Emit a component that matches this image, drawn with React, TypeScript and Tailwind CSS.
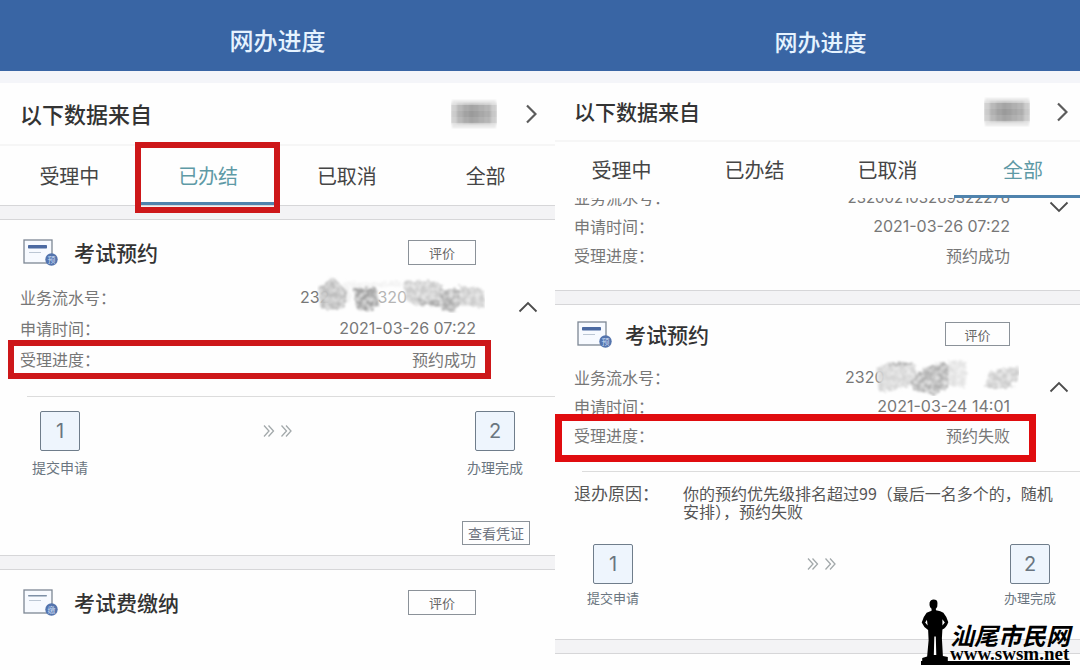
import React from "react";

const SANS = "font-['Noto_Sans_CJK_SC',sans-serif]";
const NUM = "font-['Inter','Noto_Sans_CJK_SC',sans-serif]";

function Chevron({ dir }: { dir: "right" | "up" | "down" }) {
  const d =
    dir === "right" ? "M2 1.5 L10.5 10 L2 18.5" : dir === "up" ? "M1.5 10.5 L10 2 L18.5 10.5" : "M1.5 1.5 L10 10 L18.5 1.5";
  return dir === "right" ? (
    <svg width="12" height="20" viewBox="0 0 12 20" fill="none" stroke="#5c5c5c" strokeWidth="2.2">
      <path d={d} />
    </svg>
  ) : (
    <svg width="20" height="12" viewBox="0 0 20 12" fill="none" stroke="#4c4c4c" strokeWidth="1.8">
      <path d={d} />
    </svg>
  );
}

function FormIcon({ badge, faint = false }: { badge: string; faint?: boolean }) {
  return (
    <svg className="shrink-0" width="36" height="28" viewBox="0 0 36 28">
      <rect x="1" y="2" width="28" height="23" fill="#f7faff" stroke="#7d8794" strokeWidth="1.3" />
      <rect x="5" y="7" width="19" height={faint ? 1.5 : 3.5} rx="0.7" fill={faint ? "#7d8fa6" : "#4c6aa2"} />
      <rect x="6" y={faint ? 12 : 14} width="12" height="1" fill="#bcc7d4" />
      <circle cx="28.5" cy="21.5" r="6.2" fill="#5474ad" />
      <text x="28.5" y="24.6" textAnchor="middle" fontSize="8" fill="#c9daf3" className={SANS}>
        {badge}
      </text>
    </svg>
  );
}

function Arrows() {
  return (
    <svg width="30" height="14" viewBox="0 0 30 14" fill="none" stroke="#a3a9ab" strokeWidth="1.3">
      <path d="M1 1.5 L6 7 L1 12.5 M5.500 1.5 L10.500 7 L5.500 12.5 M18.500 1.5 L23.500 7 L18.500 12.5 M23 1.5 L28 7 L23 12.5" />
    </svg>
  );
}

function Mosaic() {
  const shades = ["#c9c9c9", "#a9a9a9", "#989898", "#8e8e8e", "#959595", "#9d9d9d", "#a6a6a6", "#c4c4c4"];
  return (
    <svg width="46" height="30" viewBox="0 0 46 30" aria-hidden="true">
      <defs>
        <filter id="mosaic-soft">
          <feGaussianBlur stdDeviation="1.2" />
        </filter>
      </defs>
      <rect x="1" y="1" width="44" height="28" fill="#dcdcdc" filter="url(#mosaic-soft)" />
      <g filter="url(#mosaic-soft)">
        {shades.map((c, i) => (
          <rect key={i} x={i * 5.75} y="4" width="5.75" height="21" fill={c} opacity="0.85" />
        ))}
      </g>
      {[0, 1, 2, 3, 4].map((i) => (
        <rect key={i} y={i * 6} width="46" height="6" fill="#ffffff" opacity={[0.4, 0.1, 0, 0.1, 0.35][i]} />
      ))}
    </svg>
  );
}

type Blob = { points: string; color: string; opacity: number };

function Smudge({ id, width, blobs }: { id: string; width: number; blobs: Blob[] }) {
  return (
    <svg width={width} height="38" viewBox={`0 0 ${width} 38`} aria-hidden="true">
      <defs>
        <filter id={id} x="-5%" y="-10%" width="110%" height="120%">
          <feTurbulence type="fractalNoise" baseFrequency="0.22" numOctaves="3" seed="7" result="n" />
          <feDisplacementMap in="SourceGraphic" in2="n" scale="6" result="d" />
          <feColorMatrix in="n" type="matrix" values="0 0 0 0 1  0 0 0 0 1  0 0 0 0 1  1.6 0 0 0 -0.6" result="w" />
          <feComposite in="w" in2="d" operator="in" result="g" />
          <feMerge result="m">
            <feMergeNode in="d" />
            <feMergeNode in="g" />
          </feMerge>
          <feGaussianBlur in="m" stdDeviation="0.8" />
        </filter>
      </defs>
      <g filter={`url(#${id})`}>
        {blobs.map((b, i) => (
          <polygon key={i} points={b.points} fill={b.color} opacity={b.opacity} />
        ))}
      </g>
    </svg>
  );
}

const LEFT_BLOBS: Blob[] = [
  { points: "26,8 84,6 84,12 58,12 34,14 34,28 26,28", color: "#f2f2f2", opacity: 0.9 },
  { points: "2,12 12,5 16,2 24,10 30,16 28,34 4,34", color: "#b8b8b8", opacity: 0.95 },
  { points: "36,13 60,13 61,30 52,37 40,34", color: "#9c9c9c", opacity: 0.95 },
  { points: "86,7 110,5 126,10 124,32 98,30 88,24", color: "#c6c6c6", opacity: 0.9 },
  { points: "122,15 142,14 144,28 138,37 124,35", color: "#a8a8a8", opacity: 0.9 },
  { points: "142,10 166,14 168,32 142,30", color: "#c6c6c6", opacity: 0.9 },
  { points: "102,24 134,26 134,31 102,30", color: "#a6a6a6", opacity: 0.9 },
];

const RIGHT_BLOBS: Blob[] = [
  { points: "2,10 14,4 40,6 44,26 26,30 4,34", color: "#d0d0d0", opacity: 0.9 },
  { points: "14,4 38,5 38,8 14,8", color: "#aeaeae", opacity: 0.9 },
  { points: "36,22 50,10 68,3 80,14 78,26 60,37 38,32", color: "#aeaeae", opacity: 0.95 },
  { points: "74,2 92,4 90,30 74,28", color: "#e2e2e2", opacity: 0.9 },
  { points: "114,14 144,9 142,24 132,30 110,30", color: "#c8c8c8", opacity: 0.9 },
];

const TABS = ["受理中", "已办结", "已取消", "全部"];

function TopBar({ className }: { className: string }) {
  return (
    <header className={`flex h-[71px] items-center justify-center bg-[#3965a4] text-[#e6f3ff] ${className}`}>
      <h1 className="font-medium">网办进度</h1>
    </header>
  );
}

function SourceRow({ className }: { className: string }) {
  return (
    <a href="#source" className={`flex items-center border-t-[12px] border-[#f4f5f9] text-[#333] ${className}`}>
      <span className="flex-1 font-medium">以下数据来自</span>
      <Mosaic />
      <Chevron dir="right" />
    </a>
  );
}

function Tabs({ active, className, marked = false }: { active: number; className: string; marked?: boolean }) {
  return (
    <nav role="tablist" className={`grid border-t-2 border-[#f6f6f6] text-xl text-[#454545] ${className}`}>
      {TABS.map((t, i) => (
        <button
          key={t}
          role="tab"
          aria-selected={i === active}
          className={`relative border-b-[3px] pt-[3px] ${i === active ? "border-[#4f83ad] text-[#5e9aa6]" : "border-transparent"}`}
        >
          {t}
          {marked && i === active && <span className="absolute -top-1 -right-[2px] -bottom-[11px] -left-1 border-[6px] border-[#cd1719]" />}
        </button>
      ))}
    </nav>
  );
}

function Gap() {
  return <div className="h-[15px] shrink-0 border-y border-[#d6d6d8] bg-[#f3f3f5]" />;
}

type HeadProps = { title: string; badge: string; titleClass: string; buttonClass: string; faint?: boolean };

function CardHead({ title, badge, titleClass, buttonClass, faint }: HeadProps) {
  return (
    <div className="flex items-center">
      <FormIcon badge={badge} faint={faint} />
      <h2 className={`flex-1 text-[21px] leading-[25px] font-medium text-[#333] ${titleClass}`}>{title}</h2>
      <button className={`border border-[#8b9299] text-[13px] leading-none text-[#666] ${buttonClass}`}>评价</button>
    </div>
  );
}

function Row({ label, children, className }: { label: string; children: React.ReactNode; className: string }) {
  return (
    <div className={`relative flex items-center justify-between text-base text-[#777] ${className}`}>
      <dt>{label}：</dt>
      <dd>{children}</dd>
    </div>
  );
}

function Step({ n, label, className }: { n: number; label: string; className: string }) {
  return (
    <li className={`flex flex-col items-center text-[#6a7580] ${className}`}>
      <span className={`flex size-10 items-center justify-center rounded-xs border border-[#6f7d8b] bg-[#eef5fd] text-xl ${NUM}`}>
        {n}
      </span>
      <span>{label}</span>
    </li>
  );
}

function LeftPhone() {
  return (
    <section className="flex min-w-0 flex-col">
      <TopBar className="pt-2 text-2xl" />
      <SourceRow className="h-[73px] gap-7 pr-[18px] pl-5 text-[22px]" />
      <Tabs active={1} className="h-[61px] grid-cols-4" marked />
      <Gap />

      <article>
        <div className="pt-[18px] pr-[79px] pl-[23px]">
          <CardHead title="考试预约" badge="预" titleClass="pl-[15px]" buttonClass="h-[25px] w-[68px]" />
        </div>
        <div className="flex pt-[15px]">
          <dl className="flex-1 pl-5">
            <Row label="业务流水号" className="h-[31px]">
              <span className={`flex items-center ${NUM}`}>
                <span className="w-[176px]">
                  232<span className="pl-12 text-[#b5b5b5]">320</span>
                </span>
                <span className="absolute -top-[6px] -right-[9px]">
                  <Smudge id="smudge-a" width={168} blobs={LEFT_BLOBS} />
                </span>
              </span>
            </Row>
            <Row label="申请时间" className="h-[31px]">
              <span className={NUM}>2021-03-26 07:22</span>
            </Row>
            <Row label="受理进度" className="h-[31px]">
              预约成功
              <span className="absolute -top-[3px] -right-[15px] -bottom-[5px] -left-3 border-[6px] border-[#cd1719]" />
            </Row>
          </dl>
          <button aria-label="收起" className="flex w-[79px] justify-center pt-5 pl-6">
            <Chevron dir="up" />
          </button>
        </div>
        <div className="mt-[22px] ml-[27px] border-t border-[#dcdcdc]" />
        <ol className="flex items-start justify-between px-8 pt-[14px]">
          <Step n={1} label="提交申请" className="gap-1.5 text-sm" />
          <li className="pt-[13px]" aria-hidden="true">
            <Arrows />
          </li>
          <Step n={2} label="办理完成" className="gap-1.5 text-sm" />
        </ol>
        <div className="flex justify-end pt-11 pr-[25px] pb-[10px]">
          <button className="h-6 w-[68px] border border-[#8b9299] text-sm leading-none text-[#6f7480]">查看凭证</button>
        </div>
      </article>
      <Gap />

      <article className="pt-[18px] pr-[79px] pl-[23px]">
        <CardHead title="考试费缴纳" badge="缴" titleClass="pl-[15px]" buttonClass="h-[25px] w-[68px]" faint />
      </article>
    </section>
  );
}

function RightPhone() {
  return (
    <section className="flex min-w-0 flex-col">
      <TopBar className="pt-[11px] pl-1.5 text-[23px]" />
      <SourceRow className="h-[69px] gap-[26px] pr-3 pl-[19px] text-[21px]" />
      <Tabs active={3} className="h-[58px] grid-cols-[133fr_133fr_133fr_126fr] [&>:last-child]:pl-3" />

      <article className="flex overflow-hidden pb-[21px]">
        <dl className="-mt-4 flex-1 pl-[19px]">
          <Row label="业务流水号" className="h-[29px]">
            <span className={`text-[15px] ${NUM}`}>232002103269322276</span>
          </Row>
          <Row label="申请时间" className="h-[29px]">
            <span className={NUM}>2021-03-26 07:22</span>
          </Row>
          <Row label="受理进度" className="h-[29px]">
            预约成功
          </Row>
        </dl>
        <button aria-label="展开" className="flex w-[70px] justify-center pt-[3px] pl-7">
          <Chevron dir="down" />
        </button>
      </article>
      <Gap />

      <article>
        <div className="pt-[15px] pr-[70px] pl-[22px]">
          <CardHead title="考试预约" badge="预" titleClass="pl-3" buttonClass="h-6 w-[65px]" />
        </div>
        <div className="flex pt-[14px]">
          <dl className="flex-1 pl-[19px]">
            <Row label="业务流水号" className="h-[29px]">
              <span className={`flex items-center ${NUM}`}>
                <span className="w-[165px]">2320</span>
                <span className="absolute -top-[4px] -right-[9px]">
                  <Smudge id="smudge-b" width={144} blobs={RIGHT_BLOBS} />
                </span>
              </span>
            </Row>
            <Row label="申请时间" className="h-[29px]">
              <span className={NUM}>2021-03-24 14:01</span>
            </Row>
            <Row label="受理进度" className="h-[29px]">
              预约失败
              <span className="absolute -top-[6px] -right-[26px] -bottom-[13px] -left-[19px] border-[7px] border-[#e00c0f]" />
            </Row>
          </dl>
          <button aria-label="收起" className="flex w-[70px] justify-center pt-[19px] pl-7">
            <Chevron dir="up" />
          </button>
        </div>
        <div className="mt-[22px] ml-[27px] border-t border-[#dcdcdc]" />
        <div className="flex items-start pt-3 pr-6 pl-[19px] leading-[18px] text-[#555]">
          <span className="w-[109px] shrink-0 text-[17px]">退办原因：</span>
          <p className="text-base leading-[18px]">你的预约优先级排名超过99（最后一名多个的，随机安排），预约失败</p>
        </div>
        <ol className="flex items-start justify-between pt-6 pr-6 pb-[31px] pl-8">
          <Step n={1} label="提交申请" className="gap-1 text-[13px]" />
          <li className="pt-[13px]" aria-hidden="true">
            <Arrows />
          </li>
          <Step n={2} label="办理完成" className="gap-1 text-[13px]" />
        </ol>
      </article>
      <Gap />
    </section>
  );
}

function Watermark() {
  return (
    <div className="absolute right-[10px] bottom-[5px] border-b-[4px] border-black text-black">
      <div className="flex items-end">
        <svg width="29" height="62" viewBox="0 0 29 63" aria-hidden="true">
          <path
            d="M8.500 3.500 Q9.500 0.500 12.500 0.500 Q16.500 0.500 16.500 4 L16.300 7.500 Q15.500 9.500 14.800 10 L15 11.500 Q20 12.500 22.500 14 Q26 18 27.500 23.500 Q25.500 29 21.500 31 L21 40 L22 58 L27 59 L27 63 L1 63 L1 60 L6 58.500 L7.500 42 L7 31.500 Q2.500 29 0.500 24 Q2 18 5.500 14 L10.500 12 L10.500 10 Q8 8 8.500 3.500 Z"
            fill="#000"
          />
          <path d="M5.800 21 L4 24 L6.500 27 Z M21.500 20.500 L24 23.800 L21.500 27 Z M13.300 38 L14.800 38 L15.300 57 L12.800 57 Z" fill="#fefefe" />
        </svg>
        <div className="flex flex-col whitespace-nowrap">
          <span className="text-2xl leading-6 font-bold italic">汕尾市民网</span>
          <span className="font-['Liberation_Serif',serif] text-[19px] leading-[14px] font-bold">www.swsm.net</span>
        </div>
      </div>
    </div>
  );
}

export default function App() {
  return (
    <main lang="zh-CN" className={`relative grid min-h-screen grid-cols-[555fr_525fr] bg-[#fefefe] ${SANS}`}>
      <LeftPhone />
      <RightPhone />
      <Watermark />
    </main>
  );
}
